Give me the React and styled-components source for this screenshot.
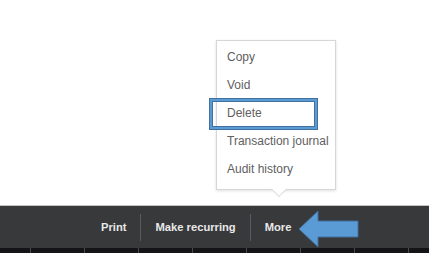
import styled, { createGlobalStyle } from "styled-components";

const menuItems = ["Copy", "Void", "Delete", "Transaction journal", "Audit history"];
const actions = ["Print", "Make recurring", "More"];

export default function App() {
    return (
        <Page>
            <GlobalStyle />
            <Stage>
                <Menu>
                    {menuItems.map((item) => (
                        <MenuItem key={item} $highlight={item === "Delete"}>
                            {item}
                        </MenuItem>
                    ))}
                </Menu>
            </Stage>
            <Toolbar>
                {actions.map((action, i) => (
                    <Group key={action}>
                        {i > 0 && <Divider />}
                        <Action>{action}</Action>
                    </Group>
                ))}
                <Pointer width="62" height="38" viewBox="0 0 62 38">
                    <polygon
                        points="1,19 20,1 20,11 60,11 60,27 20,27 20,37"
                        fill="#5b9bd5"
                        stroke="#41719c"
                        strokeWidth="1"
                    />
                </Pointer>
            </Toolbar>
            <Ruler />
        </Page>
    )
}

const GlobalStyle = createGlobalStyle`
    html, body {
        margin: 0;
        padding: 0;
        background: #FFFFFF;
        font-family: "Liberation Sans", Arial, sans-serif;
    }
`

const Page = styled.div`
    width: 429px;
    height: 253px;
    display: flex;
    flex-direction: column;
    overflow: hidden;
`

const Stage = styled.div`
    position: relative;
    height: 205px;
    flex-shrink: 0;
`

const Menu = styled.ul`
    position: absolute;
    left: 216px;
    top: 40px;
    width: 120px;
    margin: 0;
    padding: 2px 0 6px;
    list-style: none;
    background: #FFFFFF;
    border: 1px solid #d6d6d6;
    box-shadow: 0 1px 3px rgba(0, 0, 0, 0.12);
    box-sizing: border-box;
    &::before, &::after {
        content: "";
        position: absolute;
        left: 54px;
        width: 0;
        height: 0;
        border-left: 8px solid transparent;
        border-right: 8px solid transparent;
    }
    &::before {
        bottom: -8px;
        border-top: 8px solid #d0d0d0;
    }
    &::after {
        bottom: -7px;
        left: 55px;
        border-left-width: 7px;
        border-right-width: 7px;
        border-top: 7px solid #FFFFFF;
    }
`

const MenuItem = styled.li`
    position: relative;
    height: 28px;
    line-height: 28px;
    padding-left: 10px;
    font-size: 12px;
    color: #606060;
    white-space: nowrap;
    &::after {
        content: "";
        display: ${(p) => (p.$highlight ? "block" : "none")};
        position: absolute;
        left: -7px;
        right: 18px;
        top: 0;
        bottom: -2px;
        border: 2px solid #5b9bd5;
        outline: 1px solid #41719c;
        box-shadow: inset 0 0 0 1px #41719c;
    }
`

const Toolbar = styled.div`
    position: relative;
    height: 43px;
    flex-shrink: 0;
    display: flex;
    align-items: center;
    padding-left: 87px;
    background: #38393b;
    border-top: 1px solid #c4c4c4;
    box-sizing: border-box;
`

const Group = styled.div`
    display: flex;
    align-items: center;
`

const Divider = styled.span`
    width: 1px;
    height: 27px;
    background: #5a5b5e;
`

const Action = styled.span`
    padding: 0 14px;
    font-size: 11.2px;
    font-weight: 700;
    color: #e9e9e9;
`

const Pointer = styled.svg`
    position: absolute;
    left: 298px;
    top: 4px;
`

const Ruler = styled.div`
    flex: 1;
    background-color: #141416;
    background-image: repeating-linear-gradient(
        90deg,
        transparent 0,
        transparent 30px,
        #4a4a4a 30px,
        #4a4a4a 31px,
        transparent 31px,
        transparent 54px
    );
`
